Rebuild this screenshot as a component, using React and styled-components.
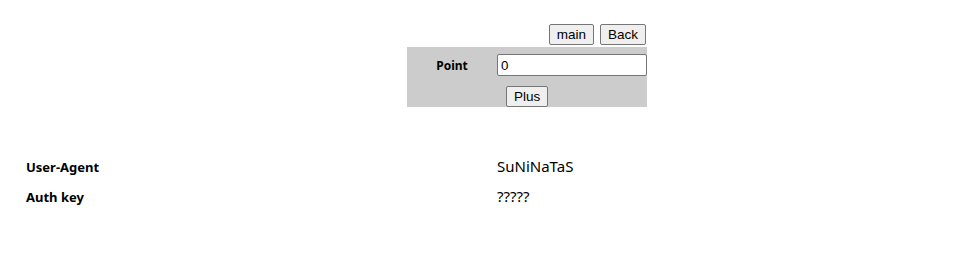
import React from 'react'
import styled, { createGlobalStyle } from 'styled-components'

const Global = createGlobalStyle`
  body {
    margin: 8px;
    background: #fff;
    font-family: 'Noto Sans', sans-serif;
    color: #000;
  }
`

const Page = styled.div`
  display: flex;
  flex-direction: column;
`

const Center = styled.div`
  width: 240px;
  margin: 16px 0 0 399px;
`

const TopBar = styled.div`
  display: flex;
  justify-content: flex-end;
  gap: 6px;
  padding-right: 1px;
  height: 23px;
  align-items: flex-start;
`

const Btn = styled.button`
  font-family: Arial, 'Liberation Sans', sans-serif;
  font-size: 13.5px;
  height: 21px;
  padding: 1px 7px;
  background: #efefef;
  border: 1px solid #767676;
  border-radius: 2px;
  color: #000;
  line-height: 1;
`

const Panel = styled.div`
  background: #cccccc;
  height: 60px;
  display: grid;
  grid-template-columns: 90px 150px;
  grid-template-rows: 36px 24px;
  align-items: center;
`

const Label = styled.div`
  font-weight: bold;
  font-size: 12px;
  text-align: center;
`

const Field = styled.input`
  box-sizing: border-box;
  width: 150px;
  height: 22px;
  border: 1px solid #767676;
  border-radius: 2px;
  padding: 1px 3px;
  font-family: Arial, 'Liberation Sans', sans-serif;
  font-size: 13.33px;
  color: #000;
`

const PlusCell = styled.div`
  grid-column: 2;
  padding-left: 9px;
  align-self: start;
  margin-top: 1px;
`

const Info = styled.div`
  margin-top: 45px;
  display: grid;
  grid-template-columns: 489px 1fr;
`

const Key = styled.div`
  font-weight: bold;
  font-size: 13px;
  padding-left: 18px;
  height: 30px;
  line-height: 30px;
`

const Value = styled.div`
  font-size: 15px;
  height: 30px;
  line-height: 28px;
`

export default function App() {
  return (
    <Page>
      <Global />
      <Center>
        <TopBar>
          <Btn>main</Btn>
          <Btn>Back</Btn>
        </TopBar>
        <Panel>
          <Label>Point</Label>
          <Field defaultValue="0" />
          <PlusCell>
            <Btn>Plus</Btn>
          </PlusCell>
        </Panel>
      </Center>
      <Info>
        <Key>User-Agent</Key>
        <Value>SuNiNaTaS</Value>
        <Key>Auth key</Key>
        <Value>?????</Value>
      </Info>
    </Page>
  )
}
